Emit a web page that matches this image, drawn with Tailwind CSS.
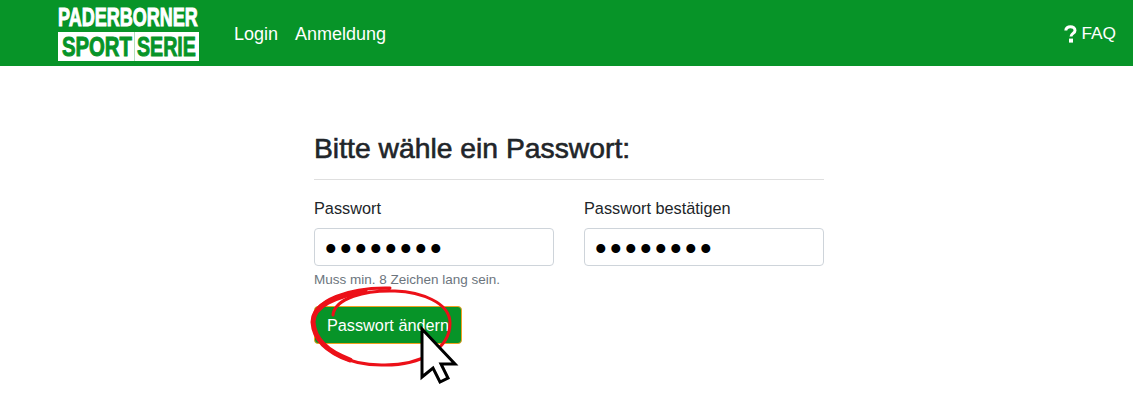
<!DOCTYPE html>
<html lang="de">
  <head>
    <meta charset="UTF-8" />
    <title>Passwort ändern</title>
    <script src="https://cdn.jsdelivr.net/npm/@tailwindcss/browser@4"></script>
  </head>
  <body class="bg-white font-['Liberation_Sans',sans-serif] text-[#212529] min-h-screen">
    <nav class="h-[66px] bg-[#079428] flex items-center pl-[58px] pr-[17px] text-white">
      <a class="block w-[141px] h-[54px] mr-[35px]">
        <div class="h-[20px] leading-[20px] mt-[1px] text-[26.5px] font-bold origin-left scale-x-[0.68] whitespace-nowrap [-webkit-text-stroke:1px_white]">PADERBORNER</div>
        <div class="mt-[5px] h-[29px] bg-white text-[#079428] flex items-center pl-[4px]">
          <span class="w-[70px] shrink-0 origin-left leading-[29px] text-[28px] font-bold scale-x-[0.725] whitespace-nowrap [-webkit-text-stroke:1px_#079428]">SPORT</span>
          <span class="w-px h-full shrink-0 ml-[2px] mr-[2px] bg-[#079428]/30"></span>
          <span class="w-[59px] shrink-0 origin-left leading-[29px] text-[28px] font-bold scale-x-[0.70] whitespace-nowrap [-webkit-text-stroke:1px_#079428]">SERIE</span>
        </div>
      </a>
      <a class="text-[18px] mr-[17px] pt-[2px]">Login</a>
      <a class="text-[18px] pt-[2px]">Anmeldung</a>
      <a class="ml-auto flex items-center gap-[4px] text-[17.3px] pt-[2px]">
        <svg class="w-[13px] h-[18px]" viewBox="0 0 13 18" fill="none">
          <path d="M1.8 5.6C1.8 3.2 3.8 1.7 6.4 1.7C9.1 1.7 11 3.2 11 5.4C11 8.4 7 8.4 7 11.6" stroke="white" stroke-width="3" />
          <rect x="5" y="13.6" width="4" height="4" fill="white" />
        </svg>
        FAQ
      </a>
    </nav>

    <main class="w-[510px] ml-[314px] pt-[65px]">
      <h1 class="text-[28.3px] leading-[34px] font-medium [-webkit-text-stroke:0.6px_#212529] pb-[14px] border-b border-[#dfdfdf]">Bitte wähle ein Passwort:</h1>
      <form class="mt-[18px]">
        <div class="grid grid-cols-2 gap-[30px]">
          <div>
            <label class="block text-[16.3px] leading-[21px] mb-[9px]">Passwort</label>
            <input type="password" value="12345678" class="block w-full h-[38px] px-[10px] pt-[3px] border border-[#ced4da] rounded-[4px] text-[33px] tracking-[3.45px] text-black outline-none" />
            <p class="mt-[5px] text-[13.5px] leading-[17px] text-[#6c757d]">Muss min. 8 Zeichen lang sein.</p>
          </div>
          <div>
            <label class="block text-[16.3px] leading-[21px] mb-[9px]">Passwort bestätigen</label>
            <input type="password" value="12345678" class="block w-full h-[38px] px-[10px] pt-[3px] border border-[#ced4da] rounded-[4px] text-[33px] tracking-[3.45px] text-black outline-none" />
          </div>
        </div>
        <div class="relative mt-[18px] w-[148px]">
          <button type="button" class="block w-[148px] h-[38px] bg-[#079428] border border-[#f0a020] rounded-[4px] text-white text-[16.3px]">Passwort ändern</button>
          <!-- hand drawn circle and mouse pointer on top of the button -->
          <svg class="absolute left-[-4px] top-[-22px] w-[150px] h-[100px] overflow-visible" viewBox="0 0 150 100" fill="none">
            <path d="M80 4C40 3 2 16 3 38C4 66 40 82 75 81C110 81 140 66 140 39C140 18 110 8 85 7C55 6 25 14 23 31" stroke="#ec1018" stroke-width="3" stroke-linecap="round" />
            <path d="M55 7C25 12 3 22 3 38C4 55 18 68 40 76" stroke="#ec1018" stroke-width="5" stroke-linecap="round" />
            <path d="M112 45L112 93L123 84L130 98L138 94L131 80L145 80Z" fill="white" stroke="black" stroke-width="3" />
          </svg>
        </div>
      </form>
    </main>
  </body>
</html>
